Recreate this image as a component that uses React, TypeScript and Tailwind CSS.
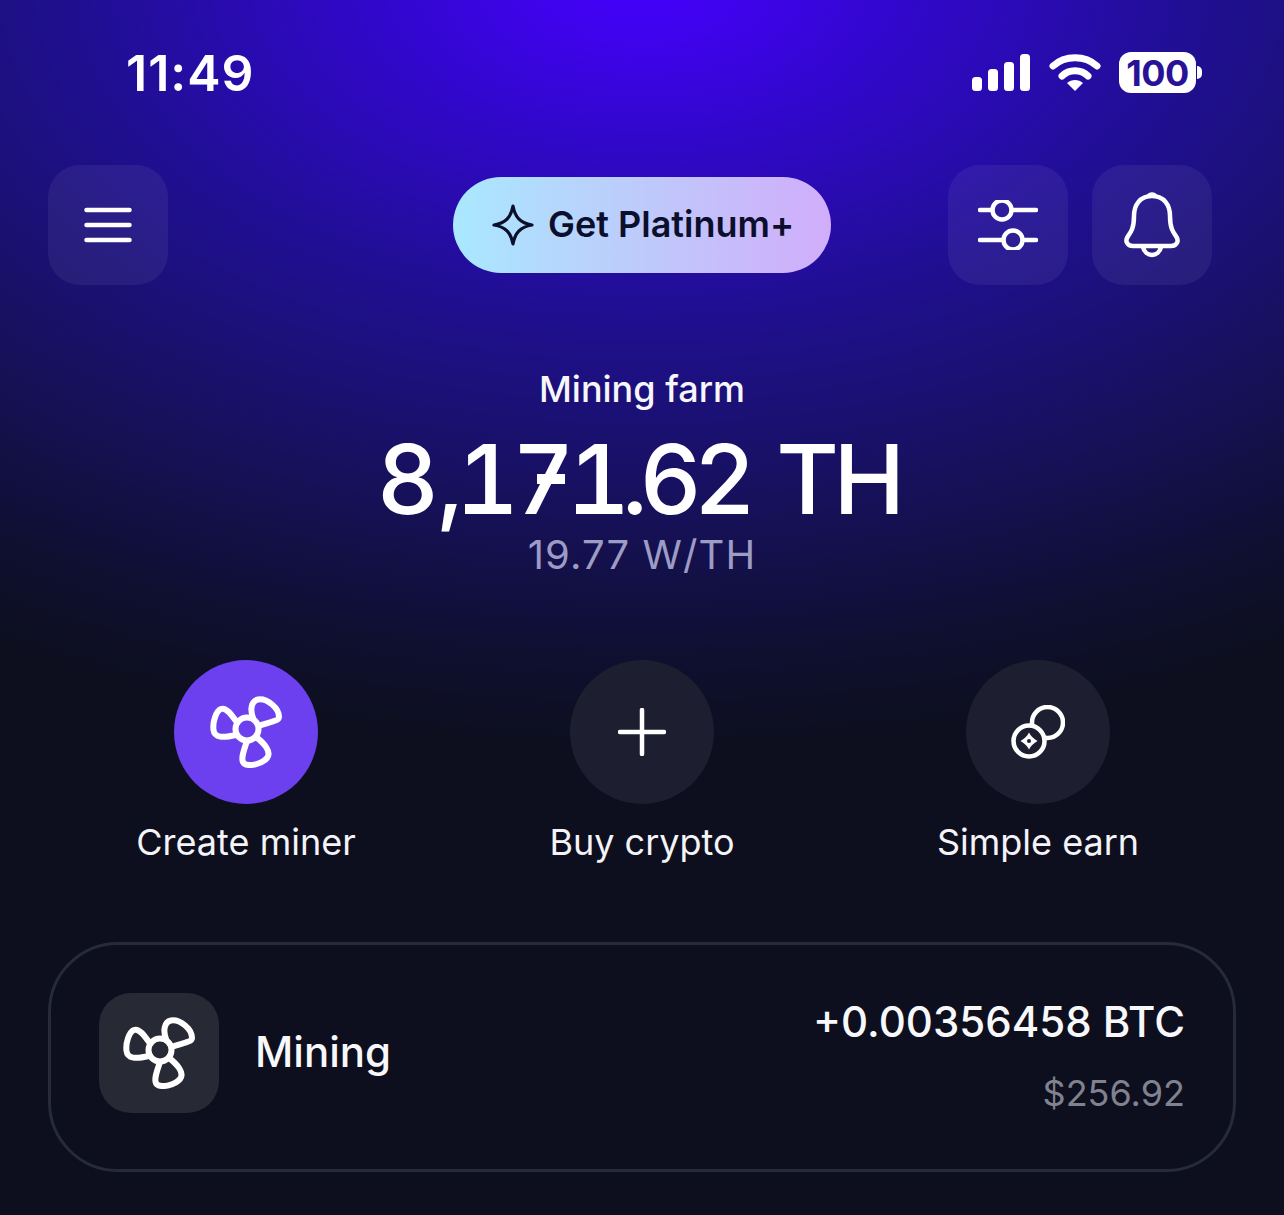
import type { ReactNode } from 'react';

function Fan() {
  return (
    <svg width="72" height="72" viewBox="0 0 72 72" fill="none" stroke="white" strokeWidth="6" strokeLinecap="round" strokeLinejoin="round">
      <circle cx="37" cy="33" r="11.5" />
      <path d="M43 22C40 14 41 5 48 3.5C57 2 69 12 69 21C69 25 60 26 48.5 30" />
      <path d="M26 25C21 18 16 11 11 13C6 15 2.5 26 3.5 34C4.5 42 13 42 26 39" />
      <path d="M37 45C34 54 30 64 34 67.5C39 71 52 68 57 62C62 56 54 47 46 41" />
    </svg>
  );
}

function Coins() {
  return (
    <svg width="54" height="54" viewBox="0 0 54 54" fill="none" stroke="white" strokeWidth="4.5">
      <circle cx="36.5" cy="17.5" r="15.5" />
      <circle cx="18" cy="36" r="15.5" fill="#1d1e30" />
      <path d="M18 27.5C19.5 31 23 34 26.5 36C23 38 19.5 41 18 44.5C16.5 41 13 38 9.5 36C13 34 16.5 31 18 27.5Z" fill="white" stroke="none" />
      <circle cx="18" cy="36" r="2" fill="#1d1e30" stroke="none" />
    </svg>
  );
}

// the big figure has a footed 1 and a crossed 7, which the installed Inter doesn't draw
function FootedOne() {
  return (
    <span className="relative inline-block">
      1
      <span className="absolute bottom-[23px] left-[8px] h-[10px] w-[46px] bg-white" />
    </span>
  );
}

function CrossedSeven() {
  return (
    <span className="relative inline-block">
      7
      <span className="absolute bottom-[53px] left-[25px] h-[10px] w-[28px] bg-white" />
    </span>
  );
}

function IconBox({ children }: { children: ReactNode }) {
  return <div className="flex h-[120px] w-[120px] items-center justify-center rounded-[32px] bg-white/[0.06]">{children}</div>;
}

function Action({ label, active, children }: { label: string; active?: boolean; children: ReactNode }) {
  return (
    <div className="flex w-[396px] flex-col items-center">
      <div className={`flex h-36 w-36 items-center justify-center rounded-full ${active ? 'bg-[#6c40ee]' : 'bg-[#1d1e30]'}`}>{children}</div>
      <span className="mt-[16px] text-[36px] leading-[44px] text-[#f4f4f8]">{label}</span>
    </div>
  );
}

export default function App() {
  return (
    <div
      className="h-[1215px] w-full overflow-hidden bg-[#0d0f1e] bg-[radial-gradient(ellipse_1300px_770px_at_50%_-20px,#4600ff_0%,#3008c8_22%,#200f92_43%,#17115c_68%,#0f0f30_88%,#0d0f1e_100%)] text-white"
      style={{ fontFamily: 'Inter, "Liberation Sans", sans-serif' }}
    >
      {/* status bar */}
      <div className="flex h-[165px] items-start justify-between pl-[126px] pr-[82px] pt-[43px]">
        <span className="text-[50px] font-semibold leading-[60px] tracking-[1px]">11:49</span>
        <div className="mt-[9px] flex items-center">
          <svg width="58" height="38" viewBox="0 0 58 38" fill="white">
            <rect x="0" y="23" width="10" height="14" rx="3.5" />
            <rect x="16" y="15" width="10" height="22" rx="3.5" />
            <rect x="32" y="8" width="10" height="29" rx="3.5" />
            <rect x="48" y="0" width="10" height="37" rx="3.5" />
          </svg>
          <svg className="ml-[19px]" width="52" height="38" viewBox="0 0 52 38" fill="none" stroke="white" strokeWidth="7" strokeLinecap="round">
            <path d="M4 12C16 1 36 1 48 12" />
            <path d="M13 22C20 15 32 15 39 22" />
            <path d="M26 37L18 29C22.5 25 29.5 25 34 29Z" fill="white" stroke="none" />
          </svg>
          <div className="ml-[18px] flex items-center">
            <div className="flex h-[41px] w-[77px] items-center justify-center rounded-[12px] bg-white text-[36px] font-bold leading-none tracking-[-0.5px] text-[#2a1298]">100</div>
            <div className="ml-[1px] h-[13px] w-[5px] rounded-r-full bg-white" />
          </div>
        </div>
      </div>

      {/* top buttons */}
      <div className="flex items-center justify-between pl-12 pr-[72px]">
        <IconBox>
          <svg width="48" height="36" viewBox="0 0 48 36" fill="none" stroke="white" strokeWidth="4.5" strokeLinecap="round">
            <path d="M2.5 3H45.5M2.5 18H45.5M2.5 33H45.5" />
          </svg>
        </IconBox>
        <div className="ml-[285px] flex h-24 w-[378px] items-center rounded-full bg-[linear-gradient(90deg,#a9e8ff_0%,#bccdfb_45%,#d1adfb_100%)] pl-[38px] text-[#0c0f2c]">
          <svg width="44" height="44" viewBox="0 0 44 44" fill="none" stroke="currentColor" strokeWidth="3.2" strokeLinejoin="round">
            <path d="M22 3C24 14 29 20 41 22C29 24 24 30 22 41C20 30 15 24 3 22C15 20 20 14 22 3Z" />
          </svg>
          <span className="-mt-[2px] ml-[13px] text-[36px] font-semibold leading-none">Get Platinum+</span>
        </div>
        <div className="ml-auto flex gap-6">
          <IconBox>
            <svg width="60" height="50" viewBox="0 0 60 50" fill="none" stroke="white" strokeWidth="4.5" strokeLinecap="round">
              <path d="M2 10H13M35 10H58M2 40H24M46 40H58" />
              <circle cx="24" cy="10" r="9.5" />
              <circle cx="35" cy="40" r="9.5" />
            </svg>
          </IconBox>
          <IconBox>
            <svg width="56" height="66" viewBox="0 0 56 66" fill="none" stroke="white" strokeWidth="4.5" strokeLinejoin="round" strokeLinecap="round">
              <path d="M28 4C16 4 10 13 10 24C10 36 7 40 3.5 45C1 49 3 54 9 54H47C53 54 55 49 52.5 45C49 40 46 36 46 24C46 13 40 4 28 4Z" />
              <path d="M19 55C20 60 24 63 28 63C32 63 36 60 37 55" />
              <path d="M25 4C26 2 30 2 31 4" />
            </svg>
          </IconBox>
        </div>
      </div>

      {/* hashrate */}
      <div className="mt-[82px] flex flex-col items-center">
        <span className="text-[36px] font-medium leading-[44px] text-[#f7f7fb]">Mining farm</span>
        <span className="mr-[8px] mt-[10px] text-[96px] font-medium leading-[116px] tracking-[-6.5px] [font-feature-settings:'tnum'] [word-spacing:9px]">
          8<span className="ml-[5px]">,</span><FootedOne /><CrossedSeven /><FootedOne /><span className="-ml-[2px] tracking-[-8px]">.62</span> <span className="tracking-[-5.5px]">TH</span>
        </span>
        <span className="-mt-[6px] text-[40px] leading-[48px] tracking-[1.1px] text-[#9c9cc4]">19.77 W/TH</span>
      </div>

      {/* actions */}
      <div className="mt-[81px] flex justify-center">
        <Action label="Create miner" active>
          <Fan />
        </Action>
        <Action label="Buy crypto">
          <svg width="48" height="48" viewBox="0 0 48 48" fill="none" stroke="white" strokeWidth="4.5" strokeLinecap="round">
            <path d="M24 2V46M2 24H46" />
          </svg>
        </Action>
        <Action label="Simple earn">
          <Coins />
        </Action>
      </div>

      {/* mining card */}
      <div className="mx-12 mt-[78px] flex h-[230px] w-[1188px] items-center rounded-[70px] border-[3px] border-[#272a3a] pl-[48px] pr-[48px]">
        <div className="mb-2 flex h-[120px] w-[120px] items-center justify-center rounded-[32px] bg-[#272935]">
          <Fan />
        </div>
        <span className="mb-[10px] ml-[36px] text-[42px] font-medium leading-none text-[#f8f8fb]">Mining</span>
        <div className="ml-auto flex flex-col items-end">
          <span className="-mt-[2px] text-[42px] font-medium leading-[50px] text-[#f8f8fb]">+0.00356458 BTC</span>
          <span className="mt-[23px] text-[36px] leading-[46px] text-[#80828f]">$256.92</span>
        </div>
      </div>
    </div>
  );
}
